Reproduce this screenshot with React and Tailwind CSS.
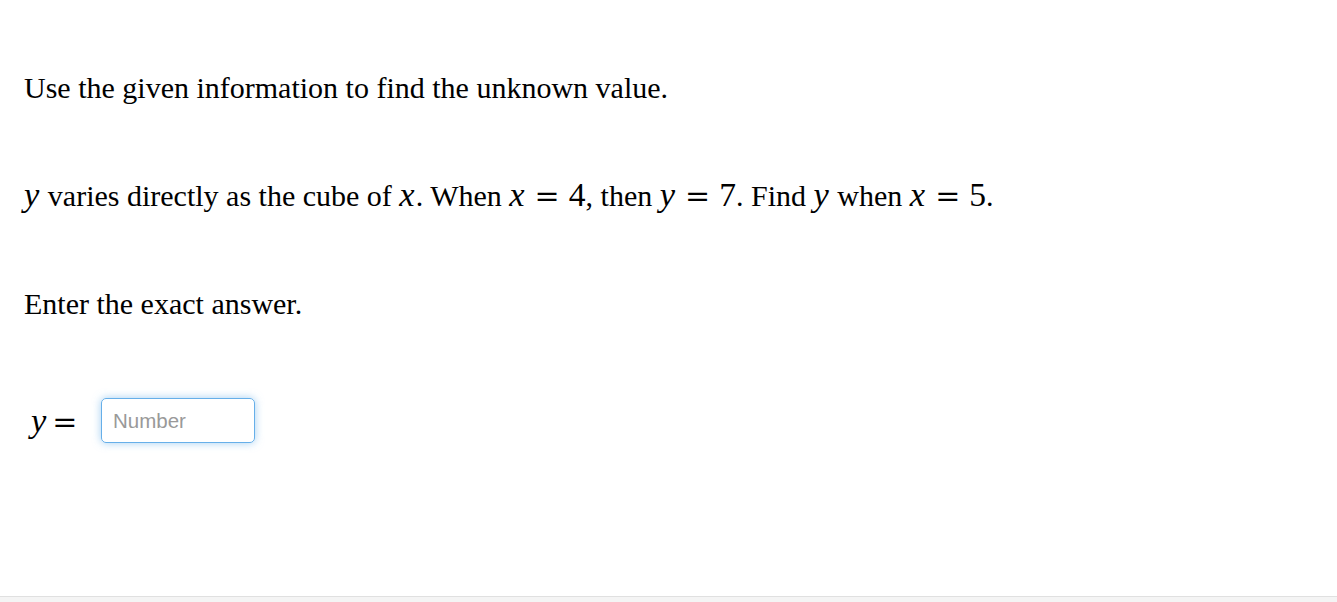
function M({ children }) {
  return <span className="italic text-[1.15em] leading-none pr-[1px]">{children}</span>;
}
function N({ children }) {
  return <span className="text-[1.12em] leading-none">{children}</span>;
}
function Eq() {
  return (
    <span
      className="text-[1em] leading-none mx-[9px]"
      style={{ fontFamily: '"DejaVu Serif", serif' }}
    >
      =
    </span>
  );
}

export default function App() {
  const serif = { fontFamily: '"Liberation Serif", "Times New Roman", serif' };
  return (
    <div className="relative h-[602px] w-full bg-white text-black overflow-hidden" style={serif}>
      <div className="h-[596px] px-[24px] pt-[68px]">
        <p className="text-[30px] leading-[40px] m-0">Use the given information to find the unknown value.</p>
        <p className="text-[30px] leading-[40px] mt-[68px]">
          <M>y</M> varies directly as the cube of <M>x</M>. When <M>x</M><Eq /><N>4</N>, then <M>y</M><Eq /><N>7</N>. Find <M>y</M> when <M>x</M><Eq /><N>5</N>.
        </p>
        <p className="text-[30px] leading-[40px] mt-[68px]">Enter the exact answer.</p>
        <div className="mt-[74px] flex items-center">
          <span className="text-[30px] ml-[7px] w-[70px] leading-none">
            <span className="italic text-[1.15em]">y</span>
            <span className="ml-[6px]" style={{ fontFamily: '"DejaVu Serif", serif' }}>=</span>
          </span>
          <input
            placeholder="Number"
            className="w-[154px] h-[45px] rounded-[5px] border border-[#66afe9] px-[11px] text-[20.5px] placeholder-[#999] shadow-[0_0_8px_rgba(102,175,233,0.6)] outline-none"
            style={{ fontFamily: '"Liberation Sans", Arial, sans-serif' }}
          />
        </div>
      </div>
      <div className="h-[1px] bg-[#e0e0e0]" />
      <div className="h-[5px] bg-[#f4f4f4]" />
    </div>
  );
}
